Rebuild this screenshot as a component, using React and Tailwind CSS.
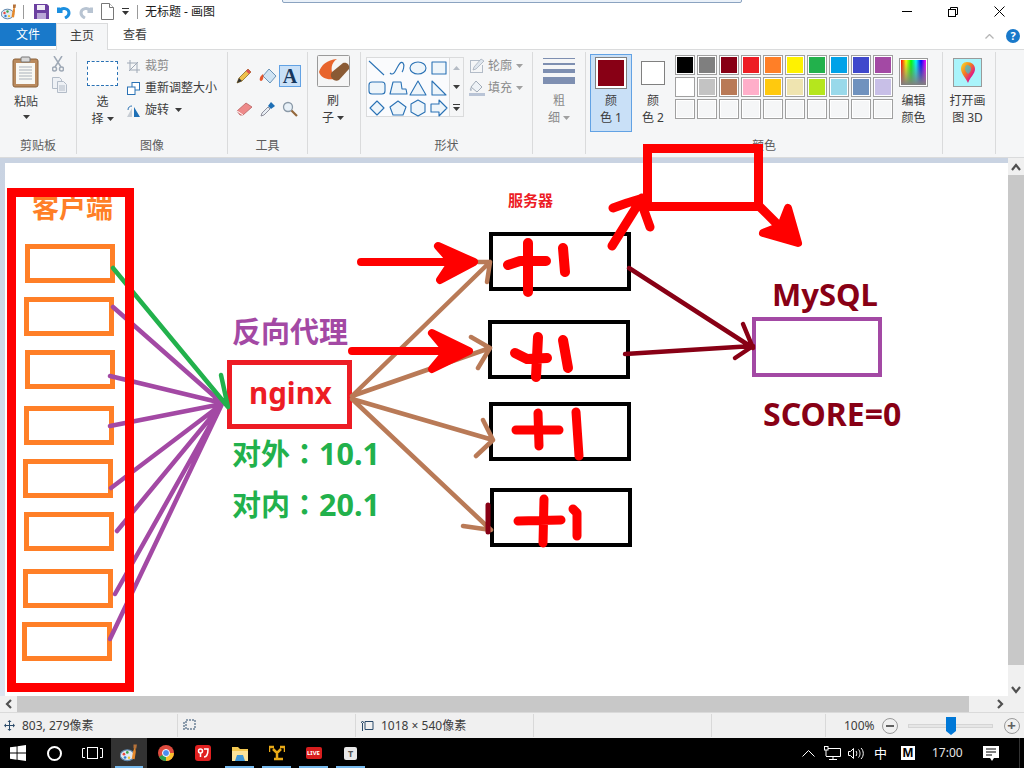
import React from "react";

const Caret = ({ c = "#3c3c3c" }) => (
  <svg width="7" height="4" viewBox="0 0 7 4" className="shrink-0"><path d="M0 0h7L3.5 4z" fill={c} /></svg>
);

const PaintIcon = ({ s = 16 }) => (
  <svg width={s} height={s} viewBox="0 0 16 16">
    <ellipse cx="6.5" cy="10" rx="6.3" ry="4.8" fill="#dfe9f3" stroke="#5f87ad" />
    <circle cx="3.5" cy="9" r="1.2" fill="#e8483f" />
    <circle cx="6.5" cy="7.5" r="1.2" fill="#3ea24b" />
    <circle cx="4.5" cy="12" r="1.2" fill="#2f7fd0" />
    <circle cx="8" cy="12.2" r="1.1" fill="#f2c230" />
    <path d="M13.5 1L11.5 7l-1 6 2.5.5 1-6.5z" fill="#e5892c" />
    <path d="M12 0.5h3l-.5 3.5h-2.500z" fill="#b5723a" />
  </svg>
);

const Shape = ({ children }) => (
  <svg width="20" height="20" viewBox="0 0 20 20" className="shrink-0">
    <g fill="#eef5fa" stroke="#2a72b5" strokeWidth="1.100" strokeLinejoin="round">{children}</g>
  </svg>
);

const shapes = [
  <path d="M2 3l15 14" fill="none" />,
  <path d="M2 15c3 3 5-1 7-5s4-7 6-5 0 8-1 9" fill="none" />,
  <ellipse cx="10" cy="10" rx="8" ry="6" />,
  <rect x="3" y="4" width="14" height="12" />,
  <rect x="2" y="4" width="16" height="12" rx="3" />,
  <path d="M5 4h8l1 7h4l1 5H2z" />,
  <path d="M10 3l8 14H2z" />,
  <path d="M3 3l14 14H3z" />,
  <path d="M10 3l7 7-7 7-7-7z" />,
  <path d="M10 3l8 6-3 8H5L2 9z" />,
  <path d="M10 2l7 4v8l-7 4-7-4V6z" />,
  <path d="M2 6h8V2l8 8-8 8v-4H2z" />,
];

const palette = [
  ["#000000", "#7f7f7f", "#880015", "#ed1c24", "#ff7f27", "#fff200", "#22b14c", "#00a2e8", "#3f48cc", "#a349a4"],
  ["#ffffff", "#c3c3c3", "#b97a57", "#ffaec9", "#ffc90e", "#efe4b0", "#b5e61d", "#99d9ea", "#7092be", "#c8bfe7"],
  Array(10).fill(null),
];

const Group = ({ w, label, children, extra = "" }) => (
  <div className={`${w} mt-[2px] h-[102px] shrink-0 border-r border-[#dadbdc] flex flex-col`}>
    <div className={`h-[84px] flex ${extra}`}>{children}</div>
    <div className="h-[18px] text-center text-[12px] leading-[20px] text-[#5c5c5c]">{label}</div>
  </div>
);

const TwoLine = ({ a, b, caret, gray, w = "w-full", top = "mt-[3px]" }) => (
  <div className={`${w} ${top} flex flex-col items-center text-[12px] leading-[17px] ${gray ? "text-[#8a8a8a]" : "text-[#3c3c3c]"}`}>
    <div>{a}</div>
    <div className="flex items-center gap-[3px]">{b}{caret && <Caret c={gray ? "#a0a0a0" : "#3c3c3c"} />}</div>
  </div>
);

const Tool = ({ children, on }) => (
  <div className={`w-[22px] h-[22px] flex items-center justify-center border ${on ? "bg-[#c9e0f7] border-[#62a2e4]" : "border-transparent"}`}>{children}</div>
);

const Ribbon = () => (
  <div className="h-[109px] bg-[#f5f6f7] border-t border-[#dadbdc] border-b flex pt-0 shrink-0">
    <Group w="w-[77px]" label="剪贴板">
      <div className="w-[52px] flex flex-col items-center pt-[4px]">
        <svg width="28" height="32" viewBox="0 0 28 32">
          <rect x="1" y="3" width="25" height="28" rx="2" fill="#b98a5e" stroke="#8c6239" />
          <rect x="4" y="7" width="19" height="21" fill="#f8f8f4" />
          <path d="M7 11h13M7 14h13M7 17h13M7 20h13M7 23h13" stroke="#a9b0ba" />
          <rect x="9" y="1" width="9" height="5" rx="1" fill="#d8d8d8" stroke="#777" />
        </svg>
        <div className="mt-[5px] text-[12px] leading-[17px] text-[#3c3c3c]">粘贴</div>
        <div className="mt-[5px]"><Caret /></div>
      </div>
      <div className="flex flex-col pt-[4px] gap-[5px]">
        <svg width="12" height="16" viewBox="0 0 12 16" fill="none" stroke="#9fa9b6" strokeWidth="1.500"><path d="M2 0l7 11M10 0L3 11" /><circle cx="2.500" cy="13" r="2" /><circle cx="9.500" cy="13" r="2" /></svg>
        <svg width="15" height="16" viewBox="0 0 15 16" fill="#eef1f5" stroke="#b3bcc8"><path d="M.5.5h7l2 2v9h-9z" /><path d="M5.500 4.500h6l3 3v8h-9z" /><path d="M7 9h6M7 11h6M7 13h6" /></svg>
      </div>
    </Group>
    <Group w="w-[151px]" label="图像">
      <div className="w-[50px] flex flex-col items-center pt-[9px] pl-[1px]">
        <div className="w-[31px] h-[25px] border border-dashed border-[#2a72b5] bg-white" />
        <TwoLine a="选" b="择" caret top="mt-[7px]" />
      </div>
      <div className="flex flex-col pt-[3px] text-[12px] leading-[22px] text-[#3c3c3c]">
        <div className="flex items-center gap-[5px] text-[#8a8a8a]">
          <svg width="13" height="13" viewBox="0 0 13 13" fill="none" stroke="#9fa9b6"><path d="M3 0v10h10M0 3h10v10M2 11L11 2" /></svg>
          <span>裁剪</span>
        </div>
        <div className="flex items-center gap-[5px]">
          <svg width="13" height="13" viewBox="0 0 13 13" fill="#fff" stroke="#2a72b5"><rect x="5" y=".5" width="7.500" height="7.500" /><rect x=".5" y="5" width="7.500" height="7.500" /></svg>
          <span>重新调整大小</span>
        </div>
        <div className="flex items-center gap-[5px]">
          <svg width="13" height="13" viewBox="0 0 13 13"><path d="M5 13V4l-5 9z" fill="#c7cdd4" /><path d="M7 13V3l6 10z" fill="#1e6fb5" /><path d="M1 6c0-3 2-4 4-4" stroke="#2a72b5" fill="none" /></svg>
          <span>旋转</span><span className="ml-[1px]"><Caret /></span>
        </div>
      </div>
    </Group>
    <Group w="w-[80px]" label="工具">
      <div className="grid grid-cols-[24px_23px_22px] ml-[4px] mt-[13px] gap-y-[11px] h-[55px] justify-items-center">
        <Tool><svg width="16" height="16" viewBox="0 0 16 16"><path d="M1 15l2-5 9-9 3 3-9 9z" fill="#f0c14b" stroke="#8a6d2f" strokeWidth=".800" /><path d="M1 15l2-5 3 3z" fill="#333" /><path d="M12 1l3 3-2 2-3-3z" fill="#d9534f" /></svg></Tool>
        <Tool><svg width="18" height="17" viewBox="0 0 18 17"><path d="M10 1l7 7-6 7-7-7z" fill="#cfe3f3" stroke="#6a94b8" /><path d="M4 6C0 9 0 13 2 13s3-4 2-7z" fill="#e4572e" /></svg></Tool>
        <Tool on><span className="text-[20px] leading-none font-bold text-[#17375e] font-['Liberation_Serif',serif]">A</span></Tool>
        <Tool><svg width="17" height="14" viewBox="0 0 17 14"><path d="M1 9l9-8 6 4-9 8H4z" fill="#ee8a8a" stroke="#b86060" strokeWidth=".800" /><path d="M1 9l6 4" stroke="#fff" /></svg></Tool>
        <Tool><svg width="16" height="16" viewBox="0 0 16 16"><path d="M1 15l1-3 6-6 2 2-6 6z" fill="#e8eef4" stroke="#778" strokeWidth=".800" /><path d="M8 5l3-4 4 4-4 3z" fill="#1e6fb5" /></svg></Tool>
        <Tool><svg width="16" height="16" viewBox="0 0 16 16" fill="none"><circle cx="6" cy="6" r="4.500" fill="#e8f1f8" stroke="#8b9aa8" strokeWidth="1.300" /><path d="M9.500 9.500L15 15" stroke="#94683c" strokeWidth="2.200" /></svg></Tool>
      </div>
    </Group>
    <Group w="w-[53px]" label="">
      <div className="w-full flex flex-col items-center pt-[3px] pr-[2px]">
        <svg width="33" height="32" viewBox="0 0 33 32"><rect x=".5" y=".5" width="32" height="31" rx="1" fill="#f5f5f5" stroke="#9a9a9a" /><path d="M2 17C4 10 10 5 20 4 14 8 13 14 17 24 10 25 4 23 2 17z" fill="#e8642c" /><path d="M15 17L26 8c4-1 7 2 6 6L22 25c-4 3-11-3-7-8z" fill="#8a5a34" /></svg>
        <TwoLine a="刷" b="子" caret top="mt-[5px]" />
      </div>
    </Group>
    <Group w="w-[172px]" label="形状">
      <div className="ml-[5px] mt-[5px] h-[60px] w-[98px] border border-[#dadbdc] bg-[#fafbfd] flex">
        <div className="w-[82px] grid grid-cols-4 content-start justify-items-center">
          {shapes.map((s, i) => <Shape key={i}>{s}</Shape>)}
        </div>
        <div className="flex-1 border-l border-[#dadbdc] bg-[#f5f6f7] flex flex-col items-center pt-[8px] gap-[15px]">
          <svg width="7" height="4" viewBox="0 0 7 4"><path d="M0 4h7L3.500 0z" fill="#b5bcc5" /></svg>
          <Caret />
          <div className="flex flex-col items-center gap-[2px]"><div className="w-[7px] h-[1px] bg-[#3c3c3c]" /><Caret /></div>
        </div>
      </div>
      <div className="ml-[5px] pt-[3px] flex flex-col text-[12px] leading-[22px] text-[#8a8a8a]">
        <div className="flex items-center gap-[3px]">
          <svg width="16" height="16" viewBox="0 0 16 16"><path d="M1 2h10v1H2v11h11V7h1v8H1z" fill="#b3bcc8" /><path d="M4 12l1-3 7-8 3 2-8 8z" fill="#dfe6ee" stroke="#9fa9b6" strokeWidth=".700" /></svg>
          <span>轮廓</span><span className="ml-[1px]"><Caret c="#a0a0a0" /></span>
        </div>
        <div className="flex items-center gap-[3px]">
          <svg width="16" height="16" viewBox="0 0 16 16"><path d="M7 1l6 6-5 5-6-5z" fill="#eef2f6" stroke="#a2acb8" /><path d="M2 7c-2 2-1 4 0 4s1-2 0-4z" fill="#b3bcc8" /><rect x="0" y="13" width="16" height="3" fill="#b9c4d6" /></svg>
          <span>填充</span><span className="ml-[1px]"><Caret c="#a0a0a0" /></span>
        </div>
      </div>
    </Group>
    <Group w="w-[53px]" label="">
      <div className="w-full flex flex-col items-center pt-[6px]">
        <div className="w-[32px] flex flex-col gap-[4px]">
          <div className="h-[1px] bg-[#7e8fb1]" />
          <div className="h-[2px] bg-[#7e8fb1]" />
          <div className="h-[4px] bg-[#7e8fb1]" />
          <div className="h-[7px] bg-[#7e8fb1]" />
        </div>
        <TwoLine a="粗" b="细" caret gray top="mt-[8px]" />
      </div>
    </Group>
    <Group w="w-[357px]" label="颜色">
      <div className="ml-[4px] mt-[2px] w-[42px] h-[78px] bg-[#c9e0f7] border border-[#62a2e4] flex flex-col items-center pt-[2px]">
        <div className="w-[32px] h-[32px] border border-[#808080] p-[2px] bg-white"><div className="w-full h-full bg-[#880015]" /></div>
        <TwoLine a="颜" b="色 1" top="mt-[3px]" />
      </div>
      <div className="w-[42px] h-[78px] mt-[2px] flex flex-col items-center pt-[7px]">
        <div className="w-[24px] h-[24px] border border-[#808080] bg-white" />
        <TwoLine a="颜" b="色 2" top="mt-[7px]" />
      </div>
      <div className="ml-[1px] mt-[3px] grid grid-cols-10 gap-[2px] content-start h-[64px]">
        {palette.flat().map((c, i) => (
          <div key={i} className="w-[20px] h-[20px] border border-[#a0a0a0] p-[1px] bg-white">
            {c ? <div className="w-full h-full" style={{ background: c }} /> : <div className="w-full h-full bg-[#f5f6f7]" />}
          </div>
        ))}
      </div>
      <div className="w-[41px] flex flex-col items-center pt-[6px]">
        <svg width="29" height="29" viewBox="0 0 29 29" className="shrink-0">
          <defs>
            <linearGradient id="hue"><stop offset="0" stopColor="#ff0000" /><stop offset=".2" stopColor="#ffff00" /><stop offset=".4" stopColor="#00ff00" /><stop offset=".6" stopColor="#00ffff" /><stop offset=".8" stopColor="#0000ff" /><stop offset="1" stopColor="#ff00ff" /></linearGradient>
            <linearGradient id="fade" x2="0" y2="1"><stop offset="0" stopColor="#808080" stopOpacity="0" /><stop offset="1" stopColor="#808080" /></linearGradient>
          </defs>
          <rect x=".5" y=".5" width="28" height="28" fill="#fff" stroke="#9a9a9a" />
          <rect x="2" y="2" width="25" height="25" fill="url(#hue)" />
          <rect x="2" y="2" width="25" height="25" fill="url(#fade)" />
        </svg>
        <TwoLine a="编辑" b="颜色" top="mt-[5px]" />
      </div>
    </Group>
    <Group w="w-[53px]" label="">
      <div className="w-full flex flex-col items-center pt-[6px] pr-[3px]">
        <svg width="29" height="29" viewBox="0 0 29 29">
          <defs>
            <linearGradient id="bal" x1="0" y1="0" x2="1" y2="1"><stop offset="0" stopColor="#f7e42c" /><stop offset=".4" stopColor="#f47c20" /><stop offset=".7" stopColor="#e02080" /><stop offset="1" stopColor="#6030c0" /></linearGradient>
          </defs>
          <rect x=".5" y=".5" width="28" height="28" fill="#a9f4fb" stroke="#9a9a9a" />
          <path d="M14 4c5 0 8 3 8 7 0 5-5 8-7 14-2-5-7-9-7-14 0-4 2-7 6-7z" fill="url(#bal)" />
          <path d="M14 7c2 0 4 1 4 4s-2 4-3 5c-1-1-3-3-3-5s1-4 2-4z" fill="#3bc0d8" opacity=".700" />
        </svg>
        <TwoLine a="打开画" b="图 3D" top="mt-[5px]" />
      </div>
    </Group>
  </div>
);

const Arrow = ({ d, rot = "" }) => (
  <svg width="10" height="8" viewBox="0 0 10 8" className={rot}><path d={d} fill="none" stroke="#505050" strokeWidth="2.200" /></svg>
);

const Win = () => (
  <svg width="16" height="16" viewBox="0 0 16 16" fill="#fff"><path d="M0 2.300l6.600-.900v6.200H0zM7.500 1.300L16 0v7.600H7.500zM0 8.400h6.600v6.300L0 13.800zM7.500 8.400H16V16l-8.500-1.200z" /></svg>
);

const TaskSlot = ({ w, on, bar, children }) => (
  <div className={`${w} h-full flex items-center justify-center relative ${on ? "bg-[#333333]" : ""}`}>
    {children}
    {bar && <div className="absolute bottom-0 left-[4px] right-[4px] h-[2px] bg-[#76b9ed]" />}
  </div>
);

const boxes = [
  ["left-[25px] top-[244px]"],
  ["left-[24px] top-[297px]"],
  ["left-[25px] top-[350px]"],
  ["left-[24px] top-[406px]"],
  ["left-[23px] top-[459px]"],
  ["left-[24px] top-[512px]"],
  ["left-[23px] top-[569px]"],
  ["left-[22px] top-[622px]"],
];

const Box = ({ cls }) => <div className={`absolute ${cls}`} />;

const L = ({ d, c, w = 4.5 }) => (
  <path d={d} fill="none" stroke={c} strokeWidth={w} strokeLinecap="round" strokeLinejoin="round" />
);

const Colon = () => <span className="font-['Noto_Sans_CJK_TC',sans-serif]">：</span>;

const Drawing = () => (
  <div className="absolute inset-0 pointer-events-none">
    {boxes.map(([p], i) => <Box key={i} cls={`${p} w-[90px] h-[39px] border-[5px] border-[#ff7f27]`} />)}
    <Box cls="left-[227px] top-[360px] w-[125px] h-[69px] border-[5px] border-[#ed1c24]" />
    <Box cls="left-[489px] top-[232px] w-[142px] h-[59px] border-[4px] border-black" />
    <Box cls="left-[488px] top-[320px] w-[142px] h-[59px] border-[4px] border-black" />
    <Box cls="left-[489px] top-[402px] w-[142px] h-[59px] border-[4px] border-black" />
    <Box cls="left-[490px] top-[488px] w-[142px] h-[59px] border-[4px] border-black" />
    <Box cls="left-[752px] top-[317px] w-[130px] h-[60px] border-[4px] border-[#a349a4]" />

    <div className="absolute left-[32px] top-[193px] text-[27px] leading-[30px] font-bold text-[#ff7f27] whitespace-nowrap">客户端</div>
    <div className="absolute left-[232px] top-[316px] text-[29px] leading-[32px] font-bold text-[#a349a4] whitespace-nowrap">反向代理</div>
    <div className="absolute left-[249px] top-[376px] text-[29.5px] leading-[34px] font-bold text-[#ed1c24] whitespace-nowrap">nginx</div>
    <div className="absolute left-[232px] top-[434px] text-[29px] leading-[36px] font-bold text-[#22b14c] whitespace-nowrap">对外<Colon /><span className="text-[30.5px]">10.1</span></div>
    <div className="absolute left-[232px] top-[485px] text-[29px] leading-[36px] font-bold text-[#22b14c] whitespace-nowrap">对内<Colon /><span className="text-[30.5px]">20.1</span></div>
    <div className="absolute left-[508px] top-[191px] text-[15px] leading-[18px] font-bold text-[#ed1c24] whitespace-nowrap">服务器</div>
    <div className="absolute left-[772px] top-[275px] text-[31px] leading-[38px] font-bold text-[#880015] whitespace-nowrap">MySQL</div>
    <div className="absolute left-[763px] top-[396px] text-[32px] leading-[36px] font-bold text-[#880015] whitespace-nowrap">SCORE=0</div>

    <svg width="1024" height="768" viewBox="0 0 1024 768" className="absolute inset-0">
      <L c="#a349a4" d="M113 307L222 403M110 376L222 403M110 426L222 404M111 488L222 404M117 531L222 404M115 594L222 404M110 639L222 404" />
      <L c="#22b14c" d="M113 268L228 407M221 375L228 407" />
      <L c="#b97a57" d="M352 396L490 262M478 262H490L487 282M352 396L490 348M471 337L490 348L478 368M352 399L493 440M483 420L493 440L476 456M352 399L491 530L463 526" />
      <L c="#880015" d="M629 268L753 348M625 354L753 346M743 324L753 348M753 346L735 358" />
      <path d="M488 505V532" stroke="#880015" strokeWidth="5" strokeLinecap="round" />
      <g fill="#ff0000" stroke="#ff0000" strokeWidth="8" strokeLinejoin="round">
        <path d="M438 246L474 262L440 280L452 262Z" />
        <path d="M432 333L469 351L432 369L447 351Z" />
        <path d="M788 208L798 243L763 233L781 226Z" />
      </g>
      <L c="#ff0000" w={8} d="M361 262H460M352 351H450" />
      <L c="#ff0000" w={9} d="M612 246L642 198M613 208L627 203L640 199L650 227M760 207L790 237" />
      <L c="#ff0000" w={10} d="M528 243V292M508 265L520 261H546M563 248L565 272" />
      <L c="#ff0000" w={10} d="M538 337L536 377M515 353L527 359L547 358M563 340L568 368" />
      <L c="#ff0000" w={9} d="M538 413L539 446M516 430H559M576 412L579 456" />
      <L c="#ff0000" w={9} d="M544 499L543 543M518 521L561 520M573 509L577 513V536" />
    </svg>

    <Box cls="left-[7px] top-[188px] w-[127px] h-[504px] border-[9px] border-[#ff0000]" />
    <Box cls="left-[643px] top-[144px] w-[120px] h-[67px] border-[9px] border-[#ff0000]" />
  </div>
);

export default function App() {
  return (
    <div className="relative w-[1024px] h-[768px] overflow-hidden bg-white flex flex-col font-['Noto_Sans','Noto_Sans_CJK_SC',sans-serif]">
      <div className="h-[23px] bg-white flex items-center relative shrink-0">
        <div className="ml-[1px]"><PaintIcon /></div>
        <div className="ml-[6px] w-[1px] h-[14px] bg-[#9a9a9a]" />
        <svg className="ml-[10px]" width="15" height="15" viewBox="0 0 15 15"><path d="M0 0h13l2 2v13H0z" fill="#6b3fa0" /><rect x="3" y="1" width="8" height="5" fill="#f0edf6" /><rect x="3" y="9" width="9" height="6" fill="#b9a6d6" /></svg>
        <svg className="ml-[8px]" width="14" height="15" viewBox="0 0 14 15" fill="none" stroke="#1c8fe0" strokeWidth="3"><path d="M1.500 3.500v4h4" /><path d="M2 7c3-4 10-3 10 2 0 3-2 4-4 5" /></svg>
        <svg className="ml-[8px]" width="14" height="15" viewBox="0 0 14 15" fill="none" stroke="#b8c4d2" strokeWidth="3"><path d="M12.500 3.500v4h-4" /><path d="M12 7C9 3 2 4 2 9c0 3 2 4 4 5" /></svg>
        <svg className="ml-[8px]" width="13" height="17" viewBox="0 0 13 17" fill="#fff" stroke="#777"><path d="M.5.500h8l4 4v12H.5z" /><path d="M8.500.500v4h4" /></svg>
        <svg className="ml-[8px]" width="7" height="7" viewBox="0 0 7 7"><rect width="7" height="1" fill="#333" /><path d="M0 3h7L3.500 7z" fill="#333" /></svg>
        <div className="ml-[8px] w-[1px] h-[14px] bg-[#9a9a9a]" />
        <div className="ml-[7px] text-[12px] leading-[22px] text-[#1a1a1a] whitespace-nowrap">无标题 - 画图</div>
        <div className="absolute left-[282px] top-[-10px] w-[460px] h-[13px] bg-[#eaf1f9] border border-[#8ba3c0] rounded-[2px]" />
        <div className="ml-auto flex items-center h-full">
          <div className="w-[46px] flex justify-center"><div className="w-[10px] h-[1px] bg-black" /></div>
          <div className="w-[46px] flex justify-center">
            <svg width="10" height="10" viewBox="0 0 10 10" fill="none" stroke="#000"><rect x=".5" y="2.500" width="7" height="7" /><path d="M2.500 2.500v-2h7v7h-2" /></svg>
          </div>
          <div className="w-[46px] flex justify-center">
            <svg width="11" height="11" viewBox="0 0 11 11" stroke="#000"><path d="M.5.500l10 10M10.500.500l-10 10" /></svg>
          </div>
          <div className="w-[2px]" />
        </div>
      </div>

      <div className="h-[26px] bg-white flex relative shrink-0 text-[12px]">
        <div className="w-[56px] h-[23px] bg-[#1979ca] text-white flex items-center justify-center">文件</div>
        <div className="w-[52px] h-[27px] border border-b-0 border-[#dadbdc] bg-[#f5f6f7] text-[#3c3c3c] flex items-center justify-center pb-[3px] z-10">主页</div>
        <div className="w-[54px] h-[23px] text-[#3c3c3c] flex items-center justify-center">查看</div>
        <div className="ml-auto flex items-center gap-[12px] pr-[4px]">
          <svg width="9" height="5" viewBox="0 0 9 5" fill="none" stroke="#b5b5b5" strokeWidth="1.300"><path d="M.5 4.500l4-4 4 4" /></svg>
          <div className="w-[14px] h-[14px] rounded-full bg-[#1979ca] text-white text-[11px] leading-[14px] font-bold text-center">?</div>
        </div>
      </div>

      <Ribbon />

      <div className="flex h-[538px] shrink-0">
        <div className="flex-1 flex flex-col">
          <div className="h-[5px] bg-[#c9d3e2]" />
          <div className="flex-1 flex bg-gradient-to-b from-[#c9d3e2] to-[#dbe5f1]">
            <div className="w-[5px]" />
            <div className="flex-1 bg-white" />
          </div>
        </div>
        <div className="w-[16px] bg-[#f0f0f0] flex flex-col">
          <div className="h-[17px] flex items-center justify-center"><Arrow d="M1 7l4-5 4 5" /></div>
          <div className="h-[490px] bg-[#c8c8c8]" />
          <div className="flex-1 flex items-end justify-center pb-[2px]"><Arrow d="M1 1l4 5 4-5" /></div>
        </div>
      </div>

      <div className="h-[16px] bg-[#f0f0f0] flex shrink-0">
        <div className="w-[17px] flex items-center justify-center"><svg width="8" height="10" viewBox="0 0 8 10"><path d="M6 1L2 5l4 4" fill="none" stroke="#505050" strokeWidth="2.200" /></svg></div>
        <div className="w-[952px] bg-[#c8c8c8]" />
        <div className="flex-1 flex items-center justify-end pr-[20px]"><svg width="8" height="10" viewBox="0 0 8 10"><path d="M2 1l4 4-4 4" fill="none" stroke="#505050" strokeWidth="2.200" /></svg></div>
      </div>

      <div className="h-[26px] bg-[#f0f0f0] border-t border-[#dadada] flex shrink-0 text-[12px] text-[#3c3c3c] items-stretch">
        <div className="w-[178px] border-r border-[#d9d9d9] flex items-center pl-[4px] gap-[7px] my-[1px]">
          <svg width="11" height="11" viewBox="0 0 11 11"><path d="M5.500 0l2 2h-1.500v3h3V3.500l2 2-2 2V6H6v3h1.500l-2 2-2-2H5V6H2v1.500l-2-2 2-2V5h3V2H3.500z" fill="#2a4a6a" /></svg>
          <span>803, 279像素</span>
        </div>
        <div className="w-[178px] border-r border-[#d9d9d9] flex items-center pl-[5px] my-[1px]">
          <svg width="14" height="13" viewBox="0 0 14 13" fill="none" stroke="#2a4a6a"><path d="M1 3v9M3 1h9v9H3z" strokeDasharray="2 1" /></svg>
        </div>
        <div className="w-[178px] border-r border-[#d9d9d9] flex items-center pl-[5px] gap-[6px] my-[1px]">
          <svg width="14" height="13" viewBox="0 0 14 13" fill="none" stroke="#2a4a6a"><path d="M1.500 4v8M4 2.500h8v8H4zM0 4l1.500-2L3 4" /></svg>
          <span>1018 × 540像素</span>
        </div>
        <div className="w-[178px] border-r border-[#d9d9d9] my-[1px]" />
        <div className="w-[114px] border-r border-[#d9d9d9] my-[1px]" />
        <div className="flex-1 flex items-center pl-[18px]">
          <span>100%</span>
          <div className="ml-[7px] w-[16px] h-[16px] rounded-full border border-[#9a9a9a] flex items-center justify-center"><div className="w-[8px] h-[2px] bg-[#606060]" /></div>
          <div className="ml-[10px] w-[85px] h-[4px] bg-[#e6e6e6] border border-[#d5d5d5] relative">
            <svg className="absolute left-[37px] top-[-8px]" width="10" height="18" viewBox="0 0 10 18"><path d="M0 0h10v14l-5 4-5-4z" fill="#0078d7" /></svg>
          </div>
          <div className="ml-[11px] w-[16px] h-[16px] rounded-full border border-[#9a9a9a] flex items-center justify-center text-[#606060] text-[15px] font-bold leading-none">+</div>
        </div>
      </div>

      <div className="h-[30px] bg-black flex items-center shrink-0 text-white">
        <div className="w-[36px] h-full flex items-center justify-center"><Win /></div>
        <div className="w-[37px] h-full flex items-center justify-center"><div className="w-[15px] h-[15px] rounded-full border-[2px] border-white" /></div>
        <div className="w-[38px] h-full flex items-center justify-center">
          <svg width="21" height="12" viewBox="0 0 21 12" fill="none" stroke="#fff"><rect x="5.500" y=".5" width="10" height="11" /><path d="M3 1.500H.5v9H3M18 1.500h2.500v9H18" /></svg>
        </div>
        <TaskSlot w="w-[36px]" on bar><PaintIcon s={18} /></TaskSlot>
        <TaskSlot w="w-[37px]">
          <svg width="16" height="16" viewBox="0 0 16 16"><circle cx="8" cy="8" r="8" fill="#de4b3e" /><path d="M8 8L1 12a8 8 0 0 0 7 4l4-8z" fill="#2ba24c" /><path d="M8 8h8a8 8 0 0 1-8 8z" fill="#fbc02d" /><circle cx="8" cy="8" r="3.500" fill="#4a8df0" stroke="#fff" /></svg>
        </TaskSlot>
        <TaskSlot w="w-[37px]">
          <div className="w-[16px] h-[16px] rounded-[3px] bg-[#e02020] flex items-center justify-center"><svg width="12" height="12" viewBox="0 0 12 12" fill="none" stroke="#fff" strokeWidth="1.500"><circle cx="3.500" cy="4" r="2" /><path d="M3.500 6v4M7 2h4c0 5-1 8-4 8" /></svg></div>
        </TaskSlot>
        <TaskSlot w="w-[37px]" bar>
          <svg width="16" height="15" viewBox="0 0 16 15"><path d="M0 1h6l2 2h8v12H0z" fill="#f3c852" /><path d="M0 5h16v10H0z" fill="#fbe39a" /><path d="M5 9h6l2 6H3z" fill="#3f97d8" /></svg>
        </TaskSlot>
        <TaskSlot w="w-[37px]" bar>
          <svg width="16" height="16" viewBox="0 0 16 16" fill="none" stroke="#e8a917" strokeWidth="2.500"><path d="M0 2h5M0 2v5M16 2h-5M16 2v5M4 4l4 4 4-4M8 8v5M5 14h9" /></svg>
        </TaskSlot>
        <TaskSlot w="w-[37px]" bar>
          <div className="w-[16px] h-[12px] rounded-[2px] bg-[#d81e1e] text-white text-[6px] leading-[12px] font-bold text-center">LIVE</div>
        </TaskSlot>
        <TaskSlot w="w-[37px]" bar>
          <div className="w-[13px] h-[13px] rounded-[2px] bg-[#e8e8e8] text-[#555] text-[9px] leading-[13px] font-bold text-center">T</div>
        </TaskSlot>
        <div className="ml-auto flex items-center h-full pr-[4px]">
          <svg width="13" height="7" viewBox="0 0 13 7" fill="none" stroke="#fff"><path d="M.5 6.500l6-6 6 6" /></svg>
          <svg className="ml-[9px]" width="17" height="14" viewBox="0 0 17 14" fill="none" stroke="#fff"><path d="M4 2.500h12.500v8H2M9 10.500V13M5 13.500h8" /><rect x=".5" y=".5" width="3.500" height="3.500" /><path d="M2 4v6" /></svg>
          <svg className="ml-[7px]" width="16" height="13" viewBox="0 0 16 13" fill="none" stroke="#fff"><path d="M.5 4.500h2l3-3v10l-3-3h-2zM8 4c1 1 1 4 0 5M10.500 2.500c2 2 2 6 0 8M13 1c3 3 3 8 0 11" /></svg>
          <div className="ml-[10px] w-[14px] text-[13px] leading-none">中</div>
          <div className="ml-[13px] w-[14px] h-[14px] bg-white text-black text-[13px] leading-[14px] font-bold text-center font-['Liberation_Sans',sans-serif]">M</div>
          <div className="ml-[17px] w-[33px] text-[12px] text-[#e6e6e6]">17:00</div>
          <svg className="ml-[18px]" width="16" height="15" viewBox="0 0 16 15"><path d="M0 0h16v12h-5l-2 3-2-3H0z" fill="#fff" /><path d="M3 3h10M3 6h10M3 9h6" stroke="#000" /></svg>
          <div className="ml-[20px] w-[1px] h-[30px] bg-[#333]" />
        </div>
      </div>

      <Drawing />
    </div>
  );
}
